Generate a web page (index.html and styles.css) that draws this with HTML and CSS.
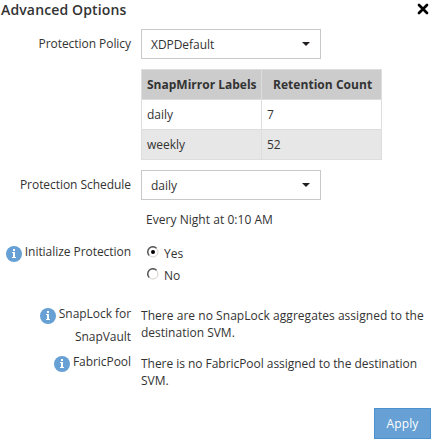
FILE: index.html
```html
<!DOCTYPE html>
<html lang="en">
<head>
<meta charset="utf-8">
<title>Advanced Options</title>
<link rel="stylesheet" href="styles.css">
</head>
<body>
<svg width="0" height="0" class="defs">
  <symbol id="info" viewBox="0 0 16 16"><circle cx="8" cy="8" r="8" fill="#66a0d4"/><path d="M7 3h2v2H7zM6 6h3v5h1v1H6v-1h1V7H6z" fill="#fff"/></symbol>
  <symbol id="caret" viewBox="0 0 8 4"><path d="M0 0h8L4 4z" fill="#231f20"/></symbol>
</svg>
<main class="dialog">
  <header class="header">
    <h1 class="title">Advanced Options</h1>
    <svg class="close" viewBox="0 0 12 12"><path d="M2 2l8 8M10 2l-8 8" stroke="#000" stroke-width="2.7" stroke-linecap="round"/></svg>
  </header>
  <section class="row policy">
    <div class="label"><span>Protection Policy</span></div>
    <div class="select"><span class="narrow">XDPDefault</span><svg class="caret"><use href="#caret"/></svg></div>
  </section>
  <table class="rules">
    <thead><tr><th>SnapMirror Labels</th><th><span class="wide">Retention Count</span></th></tr></thead>
    <tbody>
      <tr><td>daily</td><td>7</td></tr>
      <tr class="alt"><td>weekly</td><td>52</td></tr>
    </tbody>
  </table>
  <section class="row schedule">
    <div class="label"><span>Protection Schedule</span></div>
    <div class="select"><span>daily</span><svg class="caret"><use href="#caret"/></svg></div>
  </section>
  <p class="hint">Every Night at 0:10 AM</p>
  <section class="row init">
    <div class="label"><svg class="info"><use href="#info"/></svg><span>Initialize Protection</span></div>
    <div class="radios">
      <div class="option"><svg class="radio" viewBox="0 0 12 12"><circle cx="6" cy="6" r="5" fill="#fff" stroke="#d4d0c8"/><path d="M2.2 9.5A5 5 0 0 1 9.5 2.2" fill="none" stroke="#555" stroke-width="1.4"/><circle cx="6" cy="6" r="2" fill="#000"/></svg><span>Yes</span></div>
      <div class="option"><svg class="radio" viewBox="0 0 12 12"><circle cx="6" cy="6" r="5" fill="#fff" stroke="#d4d0c8"/><path d="M2.2 9.5A5 5 0 0 1 9.5 2.2" fill="none" stroke="#555" stroke-width="1.4"/></svg><span>No</span></div>
    </div>
  </section>
  <section class="row snaplock">
    <div class="label"><svg class="info"><use href="#info"/></svg><span>SnapLock for<br>SnapVault</span></div>
    <p class="note"><span class="wide">There are no SnapLock aggregates assigned to the</span><br>destination SVM.</p>
  </section>
  <section class="row fabric">
    <div class="label"><svg class="info"><use href="#info"/></svg><span>FabricPool</span></div>
    <p class="note"><span class="tight">There is no FabricPool assigned to the destination</span><br>SVM.</p>
  </section>
  <button class="apply">Apply</button>
</main>
</body>
</html>
```

FILE: styles.css
```css
* { box-sizing: border-box; }
body { margin: 0; background: #fff; color: #333; font: 12px/17px "Open Sans", "Noto Sans", sans-serif; white-space: nowrap; }
h1, p { margin: 0; }
svg { display: block; flex: none; }
.defs { position: absolute; }
.dialog { width: 435px; height: 442px; display: flex; flex-direction: column; overflow: hidden; }
.header { display: flex; justify-content: space-between; height: 29px; padding: 0 6px 0 1px; }
.title { font-size: 14px; line-height: 20px; font-weight: 600; letter-spacing: 0.14px; }
.close { width: 12px; height: 12px; margin-top: 3px; }
.row { display: grid; grid-template-columns: 131px 294px; column-gap: 10px; flex: none; }
.label { display: flex; justify-content: flex-end; text-align: right; line-height: 22px; gap: 3px; letter-spacing: -0.05px; }
.info { width: 16px; height: 16px; margin-top: 5px; }
.policy, .schedule { height: 30px; }
.policy .label, .schedule .label { line-height: 29px; }
.select { width: 180px; height: 30px; border: 1px solid #c8c8c8; padding: 0 10px 0 9px; display: flex; align-items: center; justify-content: space-between; }
.caret { width: 8px; height: 4px; }
.narrow { letter-spacing: -0.05px; }
.wide { letter-spacing: 0.04px; }
.tight { letter-spacing: -0.04px; }
.rules { margin: 10px 0 10px 141px; width: 241px; height: 91px; flex: none; border-collapse: collapse; table-layout: fixed; }
.rules th, .rules td { border: 1px solid #ddd; height: 30px; padding: 0 5px; text-align: left; }
.rules th { background: #ccc; font-weight: 700; }
.rules th:first-child { width: 120px; }
.rules th:last-child { padding-left: 11px; }
.alt { background: #e7e7e7; }
.hint { margin: 11px 0 0 146px; height: 30px; letter-spacing: 0.04px; }
.init { height: 61px; }
.radios { padding: 2px 0 0 6px; }
.option { display: flex; gap: 5px; height: 22px; padding-top: 1px; }
.option span { line-height: 19px; }
.radio { width: 12px; height: 12px; margin-top: 2px; }
.snaplock { height: 49px; }
.snaplock .label { line-height: 23px; }
.snaplock .info { margin-top: 6px; }
.fabric { height: 57px; }
.note { padding-top: 5px; }
.fabric .note { padding-top: 4px; }
.apply { align-self: flex-end; flex: none; width: 57px; height: 31px; margin-right: 4px; padding: 0; border: 1px solid #4b92d0; background: #66a0d4; color: #fff; font: 12px/27px "Open Sans", sans-serif; letter-spacing: 0.1px; }
```
